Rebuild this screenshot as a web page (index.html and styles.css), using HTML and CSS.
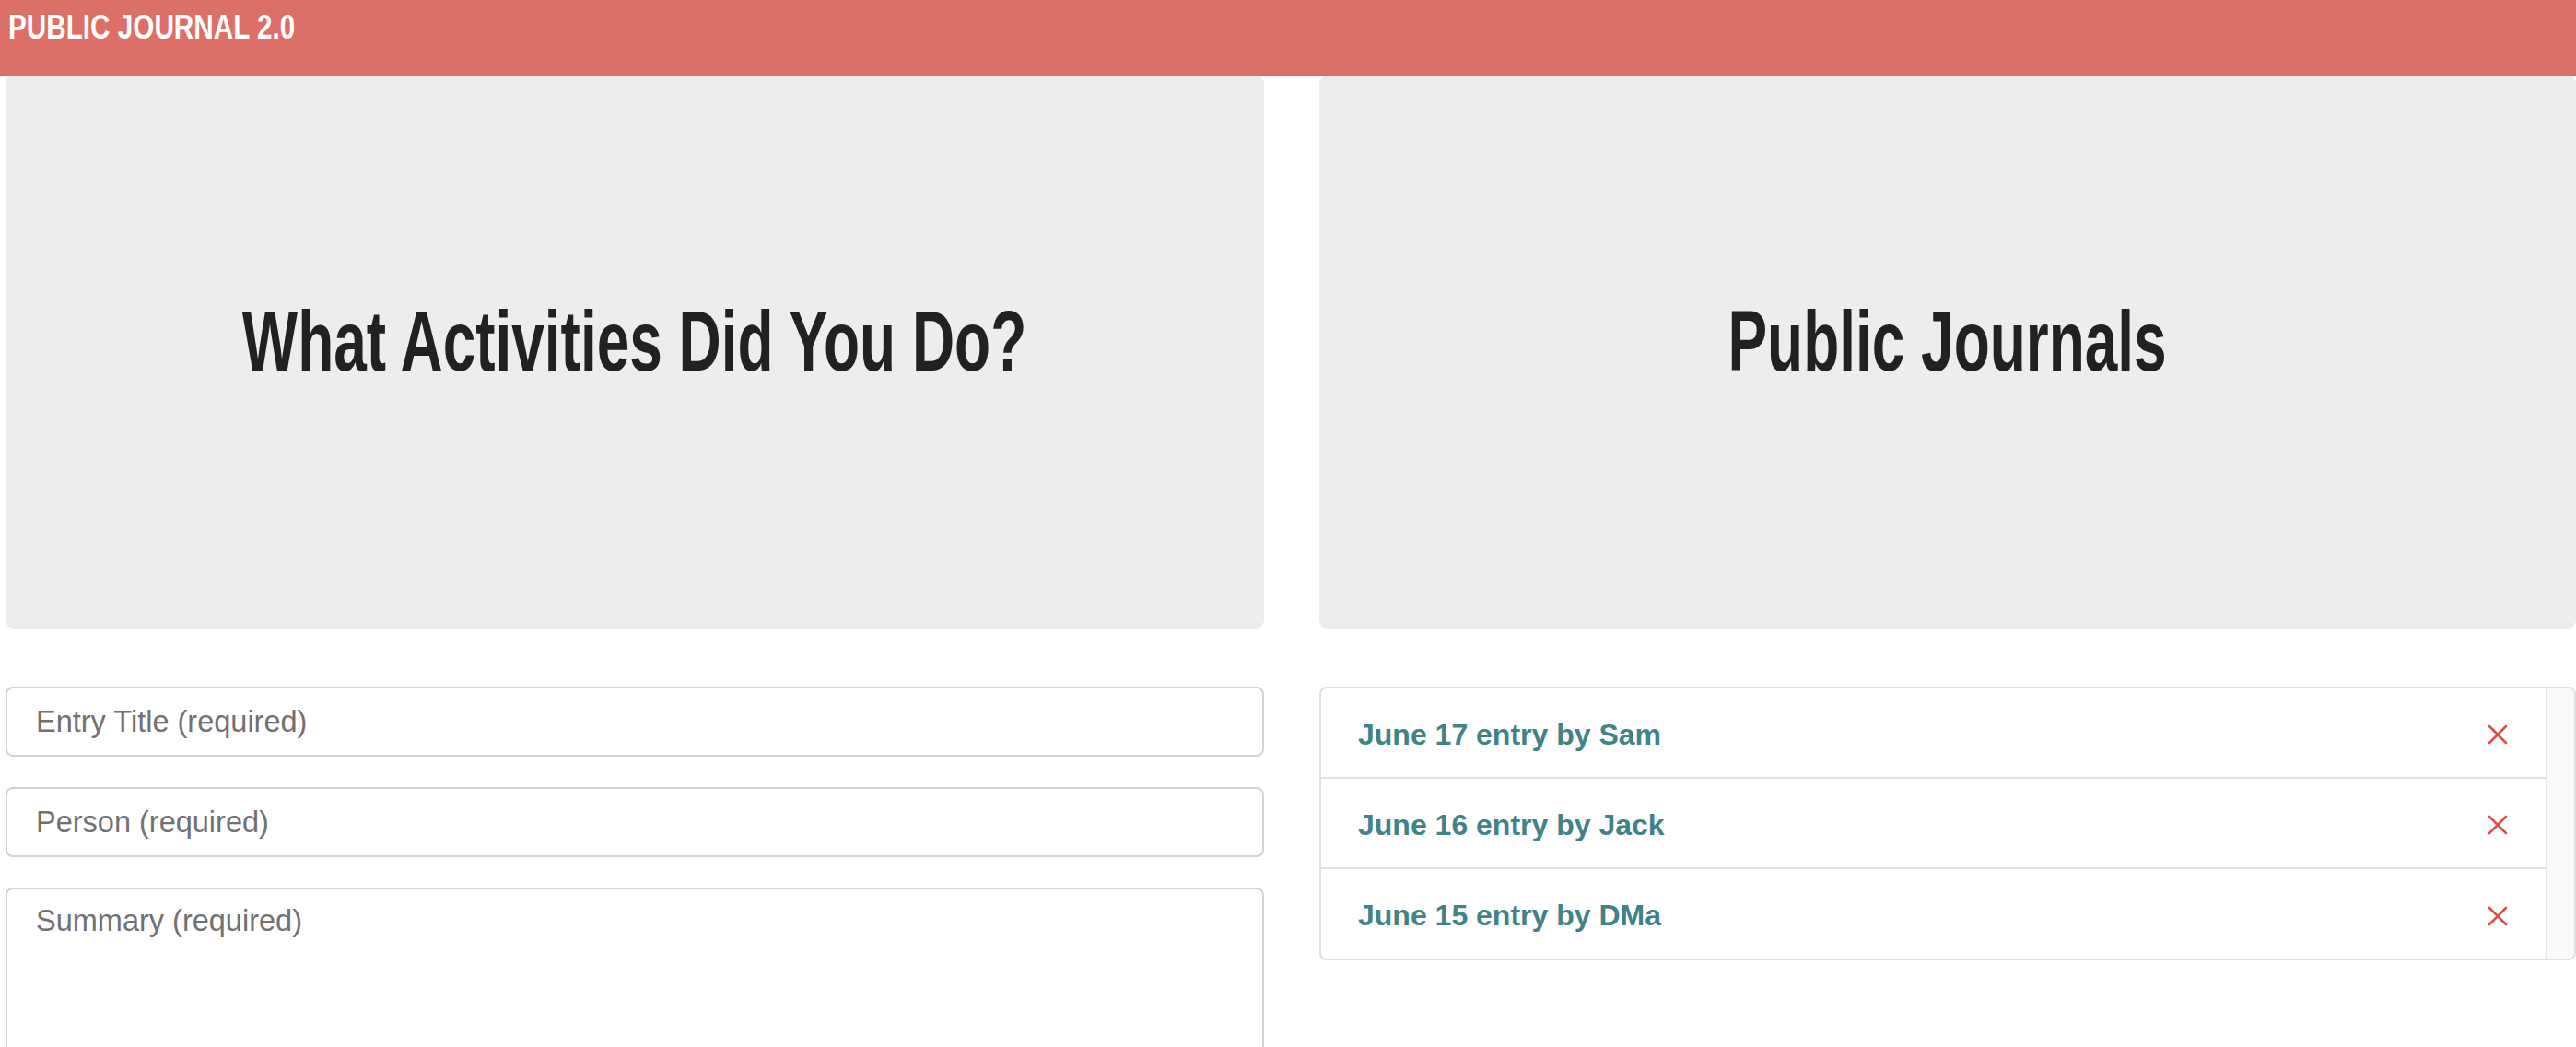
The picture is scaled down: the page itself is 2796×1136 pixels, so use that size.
FILE: index.html
```html
<!DOCTYPE html>
<html lang="en">
<head>
<meta charset="utf-8">
<title>Public Journal 2.0</title>
<link rel="stylesheet" href="styles.css">
</head>
<body>
<header class="navbar">
  <span class="brand">PUBLIC JOURNAL 2.0</span>
</header>
<main class="row">
  <section class="col col-left">
    <div class="jumbo"><h1 class="jumbo-title">What Activities Did You Do?</h1></div>
    <form class="entry-form">
      <input class="field" type="text" placeholder="Entry Title (required)">
      <input class="field" type="text" placeholder="Person (required)">
      <textarea class="field field-area" placeholder="Summary (required)"></textarea>
    </form>
  </section>
  <section class="col col-right">
    <div class="jumbo"><h1 class="jumbo-title">Public Journals</h1></div>
    <div class="list-box">
      <ul class="list">
        <li class="list-item"><a class="entry-link">June 17 entry by Sam</a><svg class="remove" viewBox="0 0 22 22"><path d="M2 2 L20 20 M20 2 L2 20"/></svg></li>
        <li class="list-item"><a class="entry-link">June 16 entry by Jack</a><svg class="remove" viewBox="0 0 22 22"><path d="M2 2 L20 20 M20 2 L2 20"/></svg></li>
        <li class="list-item"><a class="entry-link">June 15 entry by DMa</a><svg class="remove" viewBox="0 0 22 22"><path d="M2 2 L20 20 M20 2 L2 20"/></svg></li>
      </ul>
      <div class="track"></div>
    </div>
  </section>
</main>
</body>
</html>
```
FILE: styles.css
```css
html, body {
  margin: 0;
  padding: 0;
  background: #ffffff;
  overflow: hidden;
  font-family: "Liberation Sans", Arial, sans-serif;
}

.navbar {
  height: 82px;
  background: #dd6f69;
  display: flex;
  align-items: flex-start;
  padding-left: 9px;
  box-sizing: border-box;
}

.brand {
  display: inline-block;
  font-family: "Liberation Sans", Arial, sans-serif;
  font-weight: bold;
  font-size: 36px;
  line-height: 40px;
  padding-top: 10px;
  color: #ffffff;
  transform: scaleX(0.825);
  transform-origin: left center;
  white-space: nowrap;
}

.row {
  display: flex;
  gap: 60px;
  padding-left: 6px;
}

.col-left { width: 1366px; flex: none; }
.col-right { width: 1364px; flex: none; }

.jumbo {
  height: 600px;
  background: #ededed;
  border-radius: 9px;
  display: flex;
  align-items: center;
  justify-content: center;
  margin-bottom: 63px;
}

.jumbo-title {
  display: inline-block;
  margin: 0 0 22px 0;
  font-family: "Liberation Sans", Arial, sans-serif;
  font-weight: bold;
  font-size: 92px;
  line-height: 1.1;
  color: #212121;
  white-space: nowrap;
  transform: scaleX(0.695);
}

.entry-form {
  display: flex;
  flex-direction: column;
  gap: 33px;
}

.field {
  box-sizing: border-box;
  width: 100%;
  height: 76px;
  border: 2px solid #ced4da;
  border-radius: 8px;
  padding: 0 24px 0 31px;
  font-family: "Liberation Sans", Arial, sans-serif;
  font-size: 32.5px;
  color: #495057;
  background: #fff;
  outline: none;
}

.field::placeholder { color: #717171; }

.field-area {
  height: 300px;
  padding-top: 16px;
  resize: none;
}

.list-box {
  border: 2px solid #e0e0e0;
  border-radius: 8px;
  display: flex;
  overflow: hidden;
}

.list {
  list-style: none;
  margin: 0;
  padding: 0;
  flex: 1;
}

.list-item {
  height: 98px;
  display: flex;
  align-items: center;
  justify-content: space-between;
  padding: 4px 40px 0 40px;
  box-sizing: border-box;
  border-bottom: 2px solid #e0e0e0;
}

.list-item:last-child { border-bottom: none; height: 97px; }

.entry-link {
  font-family: "Liberation Sans", Arial, sans-serif;
  font-weight: bold;
  font-size: 32px;
  color: #3f8388;
}

.remove {
  width: 22px;
  height: 22px;
  margin-right: 1px;
  fill: none;
  stroke: #da4f48;
  stroke-width: 2.6;
  stroke-linecap: round;
}

.track {
  width: 29px;
  flex: none;
  background: #fafafa;
  border-left: 2px solid #e6e6e6;
}
```
